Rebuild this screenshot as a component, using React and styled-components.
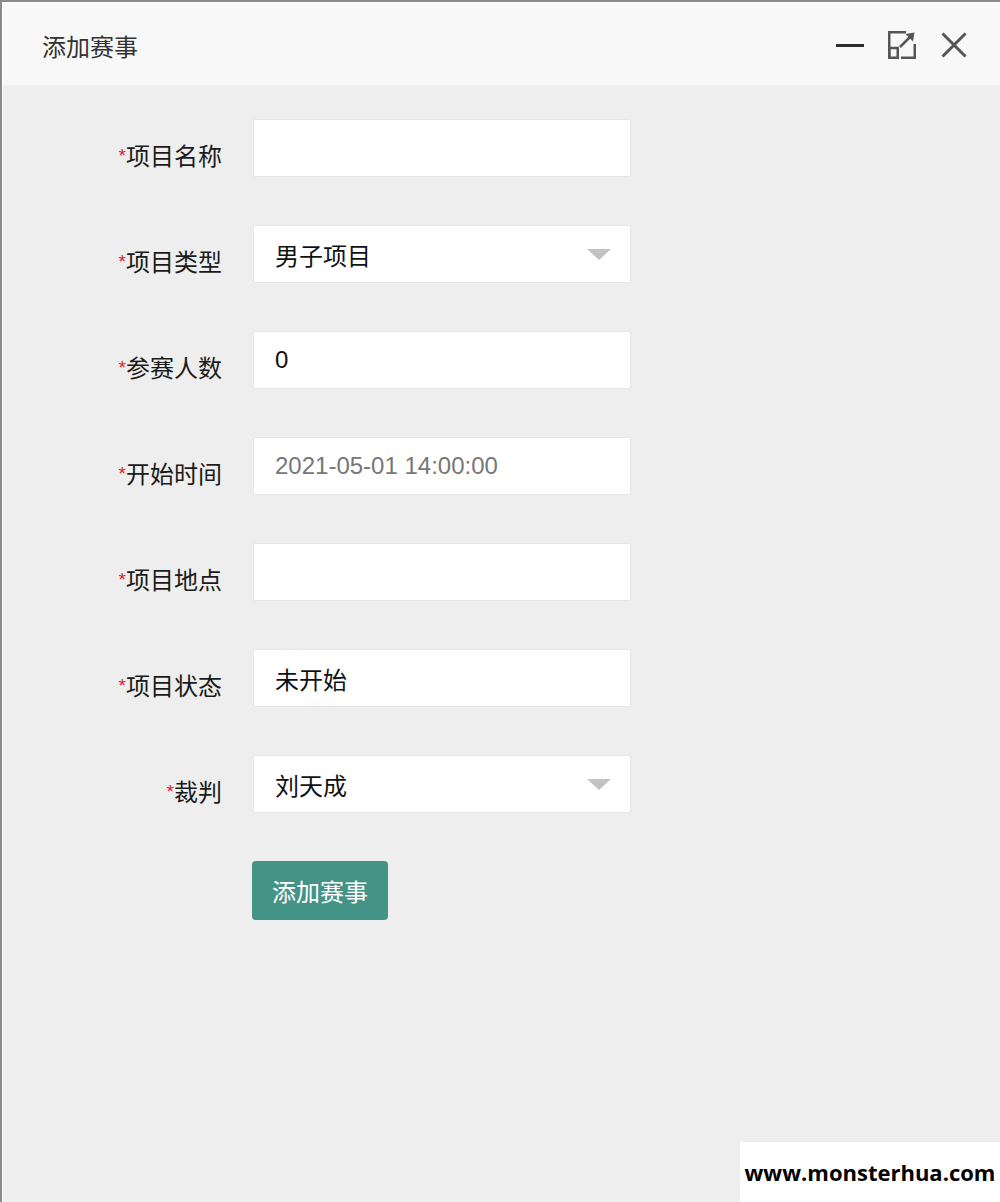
import React from "react";
import styled, { createGlobalStyle } from "styled-components";

const GlobalStyle = createGlobalStyle`
  html, body {
    margin: 0;
    padding: 0;
    background: #eeeeee;
    font-family: "Liberation Sans", "Noto Sans CJK SC", sans-serif;
  }
  * {
    box-sizing: border-box;
  }
`;

const Window = styled.div`
  position: relative;
  min-height: 1202px;
  border-top: 2px solid #8a8a8a;
  border-left: 2px solid #8a8a8a;
  background: #eeeeee;
`;

const Inner = styled.div`
  min-height: 1200px;
  border-top: 1px solid #ffffff;
  border-left: 1px solid #ffffff;
`;

const Header = styled.div`
  height: 83px;
  display: flex;
  align-items: center;
  padding: 2px 32px 0 39px;
  background: #f8f8f8;
  border-bottom: 1px solid #f3f3f3;
`;

const Title = styled.h2`
  flex: 1;
  margin: 0;
  font-size: 24px;
  font-weight: normal;
  color: #333;
`;

const Controls = styled.div`
  display: flex;
  align-items: center;
  gap: 24px;
`;

const IconBox = styled.span`
  display: block;
  width: 28px;
  height: 28px;
  svg {
    display: block;
  }
`;

const Form = styled.div`
  display: flex;
  flex-direction: column;
  gap: 48px;
  padding-top: 33px;
`;

const Row = styled.div`
  display: flex;
  align-items: flex-start;
  gap: 31px;
`;

const Label = styled.label`
  width: 219px;
  padding-top: 23px;
  line-height: 30px;
  font-size: 24px;
  color: #1a1a1a;
  text-align: right;
`;

const Star = styled.span`
  color: #e02020;
  font-size: 19px;
  vertical-align: top;
  position: relative;
  top: -1px;
`;

const Field = styled.input`
  width: 378px;
  height: 58px;
  padding: 0 21px;
  border: 1px solid #e6e6e6;
  border-radius: 2px;
  background: #fff;
  font-family: "Liberation Sans", "Noto Sans CJK SC", sans-serif;
  font-size: 24px;
  color: #111;
  outline: none;
  &::placeholder {
    color: #777;
  }
`;

const Select = styled.div`
  width: 378px;
  height: 58px;
  padding: 0 19px 0 21px;
  display: flex;
  align-items: center;
  justify-content: space-between;
  border: 1px solid #e6e6e6;
  border-radius: 2px;
  background: #fff;
  font-size: 24px;
  color: #111;
`;

const Caret = styled.span`
  width: 0;
  height: 0;
  border-left: 12px solid transparent;
  border-right: 12px solid transparent;
  border-top: 11px solid #c2c2c2;
`;

const Submit = styled.button`
  margin-left: 249px;
  width: 136px;
  height: 59px;
  border: none;
  border-radius: 4px;
  background: #439486;
  color: #fff;
  font-family: "Liberation Sans", "Noto Sans CJK SC", sans-serif;
  font-size: 24px;
  cursor: pointer;
`;

const Watermark = styled.div`
  position: absolute;
  right: 0;
  bottom: 0;
  width: 260px;
  height: 60px;
  display: flex;
  align-items: center;
  justify-content: center;
  background: #fff;
  font-family: "Open Sans", sans-serif;
  font-weight: 700;
  font-size: 22px;
  color: #000;
`;

const MinIcon = () => (
  <svg width="28" height="28" viewBox="0 0 28 28">
    <rect x="0" y="13" width="28" height="3" fill="#2d2d2d" />
  </svg>
);

const MaxIcon = () => (
  <svg width="28" height="28" viewBox="0 0 28 28" fill="none" stroke="#555" strokeWidth="2.5">
    <path d="M18 1.25 H1.25 V26.75" />
    <path d="M26.75 13 V26.75 H13" />
    <rect x="1.25" y="17" width="8.5" height="9.75" />
    <path d="M12 16 L23 5" />
    <polygon points="26.5,1.5 17.5,3 25,10.5" fill="#555" stroke="none" />
  </svg>
);

const CloseIcon = () => (
  <svg width="28" height="28" viewBox="0 0 28 28" stroke="#555" strokeWidth="3">
    <path d="M2.5 2.5 L25.5 25.5 M25.5 2.5 L2.5 25.5" />
  </svg>
);

const fields = [
  { label: "项目名称", type: "input", value: "" },
  { label: "项目类型", type: "select", value: "男子项目" },
  { label: "参赛人数", type: "input", value: "0" },
  { label: "开始时间", type: "input", placeholder: "2021-05-01 14:00:00" },
  { label: "项目地点", type: "input", value: "" },
  { label: "项目状态", type: "input", value: "未开始" },
  { label: "裁判", type: "select", value: "刘天成" },
];

export default function App() {
  return (
    <>
      <GlobalStyle />
      <Window>
        <Inner>
          <Header>
            <Title>添加赛事</Title>
            <Controls>
              <IconBox><MinIcon /></IconBox>
              <IconBox><MaxIcon /></IconBox>
              <IconBox><CloseIcon /></IconBox>
            </Controls>
          </Header>
          <Form>
            {fields.map((f) => (
              <Row key={f.label}>
                <Label>
                  <Star>*</Star>
                  {f.label}
                </Label>
                {f.type === "select" ? (
                  <Select>
                    <span>{f.value}</span>
                    <Caret />
                  </Select>
                ) : (
                  <Field
                    readOnly
                    defaultValue={f.value}
                    placeholder={f.placeholder}
                  />
                )}
              </Row>
            ))}
            <Submit>添加赛事</Submit>
          </Form>
        </Inner>
        <Watermark>www.monsterhua.com</Watermark>
      </Window>
    </>
  );
}
